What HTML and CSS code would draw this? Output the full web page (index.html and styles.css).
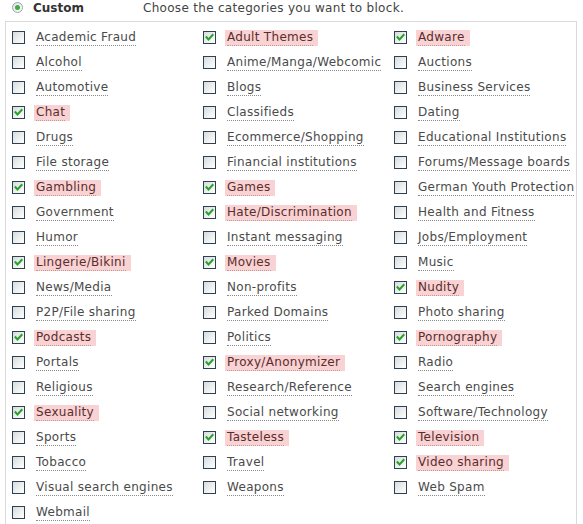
FILE: index.html
```html
<!DOCTYPE html>
<html>
<head>
<meta charset="utf-8">
<link rel="stylesheet" href="styles.css">
</head>
<body>
<div class="head">
  <span class="radio"><span class="dot"></span></span>
  <span class="title">Custom</span>
  <span class="desc">Choose the categories you want to block.</span>
</div>
<div class="box">
  <div class="grid">
    <div class="item"><span class="cb"></span><span class="lbl"><span class="t">Academic Fraud</span></span></div>
    <div class="item on"><span class="cb"><svg viewBox="0 0 11 11"><path d="M2.5 5.2 L4.5 7.4 L8.6 3" /></svg></span><span class="lbl"><span class="t">Adult Themes</span></span></div>
    <div class="item on"><span class="cb"><svg viewBox="0 0 11 11"><path d="M2.5 5.2 L4.5 7.4 L8.6 3" /></svg></span><span class="lbl"><span class="t">Adware</span></span></div>

    <div class="item"><span class="cb"></span><span class="lbl"><span class="t">Alcohol</span></span></div>
    <div class="item"><span class="cb"></span><span class="lbl"><span class="t">Anime/Manga/Webcomic</span></span></div>
    <div class="item"><span class="cb"></span><span class="lbl"><span class="t">Auctions</span></span></div>

    <div class="item"><span class="cb"></span><span class="lbl"><span class="t">Automotive</span></span></div>
    <div class="item"><span class="cb"></span><span class="lbl"><span class="t">Blogs</span></span></div>
    <div class="item"><span class="cb"></span><span class="lbl"><span class="t">Business Services</span></span></div>

    <div class="item on"><span class="cb"><svg viewBox="0 0 11 11"><path d="M2.5 5.2 L4.5 7.4 L8.6 3" /></svg></span><span class="lbl"><span class="t">Chat</span></span></div>
    <div class="item"><span class="cb"></span><span class="lbl"><span class="t">Classifieds</span></span></div>
    <div class="item"><span class="cb"></span><span class="lbl"><span class="t">Dating</span></span></div>

    <div class="item"><span class="cb"></span><span class="lbl"><span class="t">Drugs</span></span></div>
    <div class="item"><span class="cb"></span><span class="lbl"><span class="t">Ecommerce/Shopping</span></span></div>
    <div class="item"><span class="cb"></span><span class="lbl"><span class="t">Educational Institutions</span></span></div>

    <div class="item"><span class="cb"></span><span class="lbl"><span class="t">File storage</span></span></div>
    <div class="item"><span class="cb"></span><span class="lbl"><span class="t">Financial institutions</span></span></div>
    <div class="item"><span class="cb"></span><span class="lbl"><span class="t">Forums/Message boards</span></span></div>

    <div class="item on"><span class="cb"><svg viewBox="0 0 11 11"><path d="M2.5 5.2 L4.5 7.4 L8.6 3" /></svg></span><span class="lbl"><span class="t">Gambling</span></span></div>
    <div class="item on"><span class="cb"><svg viewBox="0 0 11 11"><path d="M2.5 5.2 L4.5 7.4 L8.6 3" /></svg></span><span class="lbl"><span class="t">Games</span></span></div>
    <div class="item"><span class="cb"></span><span class="lbl"><span class="t">German Youth Protection</span></span></div>

    <div class="item"><span class="cb"></span><span class="lbl"><span class="t">Government</span></span></div>
    <div class="item on"><span class="cb"><svg viewBox="0 0 11 11"><path d="M2.5 5.2 L4.5 7.4 L8.6 3" /></svg></span><span class="lbl"><span class="t">Hate/Discrimination</span></span></div>
    <div class="item"><span class="cb"></span><span class="lbl"><span class="t">Health and Fitness</span></span></div>

    <div class="item"><span class="cb"></span><span class="lbl"><span class="t">Humor</span></span></div>
    <div class="item"><span class="cb"></span><span class="lbl"><span class="t">Instant messaging</span></span></div>
    <div class="item"><span class="cb"></span><span class="lbl"><span class="t">Jobs/Employment</span></span></div>

    <div class="item on"><span class="cb"><svg viewBox="0 0 11 11"><path d="M2.5 5.2 L4.5 7.4 L8.6 3" /></svg></span><span class="lbl"><span class="t">Lingerie/Bikini</span></span></div>
    <div class="item on"><span class="cb"><svg viewBox="0 0 11 11"><path d="M2.5 5.2 L4.5 7.4 L8.6 3" /></svg></span><span class="lbl"><span class="t">Movies</span></span></div>
    <div class="item"><span class="cb"></span><span class="lbl"><span class="t">Music</span></span></div>

    <div class="item"><span class="cb"></span><span class="lbl"><span class="t">News/Media</span></span></div>
    <div class="item"><span class="cb"></span><span class="lbl"><span class="t">Non-profits</span></span></div>
    <div class="item on"><span class="cb"><svg viewBox="0 0 11 11"><path d="M2.5 5.2 L4.5 7.4 L8.6 3" /></svg></span><span class="lbl"><span class="t">Nudity</span></span></div>

    <div class="item"><span class="cb"></span><span class="lbl"><span class="t">P2P/File sharing</span></span></div>
    <div class="item"><span class="cb"></span><span class="lbl"><span class="t">Parked Domains</span></span></div>
    <div class="item"><span class="cb"></span><span class="lbl"><span class="t">Photo sharing</span></span></div>

    <div class="item on"><span class="cb"><svg viewBox="0 0 11 11"><path d="M2.5 5.2 L4.5 7.4 L8.6 3" /></svg></span><span class="lbl"><span class="t">Podcasts</span></span></div>
    <div class="item"><span class="cb"></span><span class="lbl"><span class="t">Politics</span></span></div>
    <div class="item on"><span class="cb"><svg viewBox="0 0 11 11"><path d="M2.5 5.2 L4.5 7.4 L8.6 3" /></svg></span><span class="lbl"><span class="t">Pornography</span></span></div>

    <div class="item"><span class="cb"></span><span class="lbl"><span class="t">Portals</span></span></div>
    <div class="item on"><span class="cb"><svg viewBox="0 0 11 11"><path d="M2.5 5.2 L4.5 7.4 L8.6 3" /></svg></span><span class="lbl"><span class="t">Proxy/Anonymizer</span></span></div>
    <div class="item"><span class="cb"></span><span class="lbl"><span class="t">Radio</span></span></div>

    <div class="item"><span class="cb"></span><span class="lbl"><span class="t">Religious</span></span></div>
    <div class="item"><span class="cb"></span><span class="lbl"><span class="t">Research/Reference</span></span></div>
    <div class="item"><span class="cb"></span><span class="lbl"><span class="t">Search engines</span></span></div>

    <div class="item on"><span class="cb"><svg viewBox="0 0 11 11"><path d="M2.5 5.2 L4.5 7.4 L8.6 3" /></svg></span><span class="lbl"><span class="t">Sexuality</span></span></div>
    <div class="item"><span class="cb"></span><span class="lbl"><span class="t">Social networking</span></span></div>
    <div class="item"><span class="cb"></span><span class="lbl"><span class="t">Software/Technology</span></span></div>

    <div class="item"><span class="cb"></span><span class="lbl"><span class="t">Sports</span></span></div>
    <div class="item on"><span class="cb"><svg viewBox="0 0 11 11"><path d="M2.5 5.2 L4.5 7.4 L8.6 3" /></svg></span><span class="lbl"><span class="t">Tasteless</span></span></div>
    <div class="item on"><span class="cb"><svg viewBox="0 0 11 11"><path d="M2.5 5.2 L4.5 7.4 L8.6 3" /></svg></span><span class="lbl"><span class="t">Television</span></span></div>

    <div class="item"><span class="cb"></span><span class="lbl"><span class="t">Tobacco</span></span></div>
    <div class="item"><span class="cb"></span><span class="lbl"><span class="t">Travel</span></span></div>
    <div class="item on"><span class="cb"><svg viewBox="0 0 11 11"><path d="M2.5 5.2 L4.5 7.4 L8.6 3" /></svg></span><span class="lbl"><span class="t">Video sharing</span></span></div>

    <div class="item"><span class="cb"></span><span class="lbl"><span class="t">Visual search engines</span></span></div>
    <div class="item"><span class="cb"></span><span class="lbl"><span class="t">Weapons</span></span></div>
    <div class="item"><span class="cb"></span><span class="lbl"><span class="t">Web Spam</span></span></div>

    <div class="item"><span class="cb"></span><span class="lbl"><span class="t">Webmail</span></span></div>
  </div>
</div>
</body>
</html>
```

FILE: styles.css
```css
html, body {
  margin: 0;
  padding: 0;
  background: #ffffff;
}
body {
  font-family: "DejaVu Sans", Verdana, sans-serif;
  font-size: 12px;
  letter-spacing: 0.3px;
  color: #4a4a4a;
}
.head {
  height: 21px;
  display: flex;
  align-items: center;
  padding-left: 12px;
  box-sizing: border-box;
  padding-bottom: 6px;
  padding-top: 0;
}
.radio {
  width: 11px;
  height: 11px;
  border: 1px solid #9aa4ad;
  border-radius: 50%;
  background: linear-gradient(135deg, #dfe3e6, #ffffff);
  display: flex;
  align-items: center;
  justify-content: center;
  box-sizing: border-box;
}
.dot {
  width: 5px;
  height: 5px;
  border-radius: 50%;
  background: #3fae3f;
}
.title {
  font-weight: bold;
  letter-spacing: 0;
  color: #333;
  margin-left: 10px;
  width: 110px;
}
.desc {
  color: #444;
}
.box {
  margin-left: 5px;
  width: 572px;
  border: 1px solid #dadada;
  padding: 3px 0 12px 6px;
  box-sizing: border-box;
}
.grid {
  display: grid;
  grid-template-columns: 191px 191px 1fr;
  grid-auto-rows: 25px;
}
.item {
  display: flex;
  align-items: center;
}
.cb {
  width: 13px;
  height: 13px;
  box-sizing: border-box;
  border: 1px solid #2d4152;
  background: linear-gradient(135deg, #d8dbdc 0%, #eef0f0 55%, #ffffff 100%);
  flex: none;
  display: block;
}
.cb svg {
  display: block;
  width: 11px;
  height: 11px;
  fill: none;
  stroke: #26a326;
  stroke-width: 2;
  stroke-linecap: square;
}
.lbl {
  margin-left: 9px;
  padding: 0 5px 0 2px;
  display: inline-block;
  line-height: 15px;
  white-space: nowrap;
}
.t {
  display: inline-block;
  border-bottom: 1px dotted #8a8a8a;
}
.on .lbl {
  background: #f9d2d3;
  color: #5a2d2d;
}
.on .t {
  border-bottom-color: #c79494;
}
```
